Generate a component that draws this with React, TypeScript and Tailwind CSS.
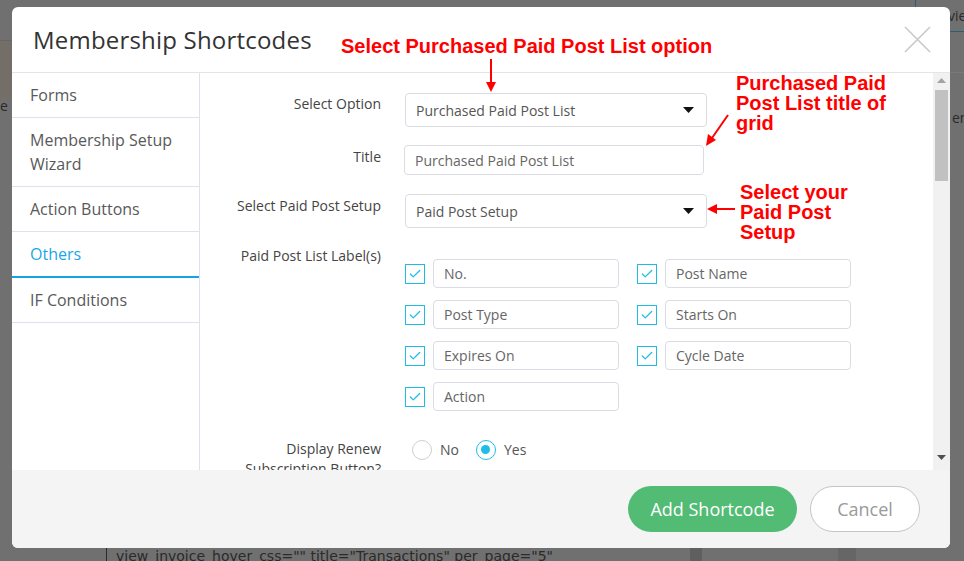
import { Check } from "lucide-react"

const sideItems = [
  { label: "Forms" },
  { label: "Membership Setup Wizard" },
  { label: "Action Buttons" },
  { label: "Others", active: true },
  { label: "IF Conditions" },
]

const labelFields = ["No.", "Post Name", "Post Type", "Starts On", "Expires On", "Cycle Date", "Action"]

function Caret() {
  return (
    <svg width="11" height="6" viewBox="0 0 11 6" className="shrink-0">
      <path d="M0 0h11L5.5 6z" fill="#111" />
    </svg>
  )
}

function SelectBox({ value }: { value: string }) {
  return (
    <div className="flex h-[34px] w-[302px] items-center justify-between rounded-[4px] border border-[#d9dde3] bg-white pl-[10px] pr-[12px] text-[14px] text-[#555]">
      <span>{value}</span>
      <Caret />
    </div>
  )
}

function CheckBox() {
  return (
    <div className="flex h-[20px] w-[20px] shrink-0 items-center justify-center border-[1.5px] border-[#1dbde6] bg-white">
      <Check size={14} strokeWidth={2.2} color="#1dbde6" />
    </div>
  )
}

function Radio({ checked }: { checked?: boolean }) {
  return (
    <div
      className={`flex h-[20px] w-[20px] items-center justify-center rounded-full border bg-white ${
        checked ? "border-[#1dbde6]" : "border-[#cfcfcf]"
      }`}
    >
      {checked && <div className="h-[9px] w-[9px] rounded-full bg-[#1dbde6]" />}
    </div>
  )
}

export default function App() {
  return (
    <div className="relative h-[561px] w-[964px] overflow-hidden bg-[#707070] pl-[12px] pt-[7px] font-['Open_Sans',sans-serif]">
      {/* page behind the overlay */}
      <div className="absolute left-0 top-[40px] h-[58px] w-[12px] border-t border-[#666] bg-[#746e69]" />
      <div className="absolute left-0 top-[95px] text-[14px] text-[#2a2a2a]">e is</div>
      <div className="absolute left-[915px] top-[-4px] h-[36px] w-[70px] rounded-[4px] border border-[#2a5d78] pl-[32px] pt-[8px] text-[14px] text-[#2a2a2a]">
        view
      </div>
      <div className="absolute left-[950px] top-[72px] h-[1px] w-[14px] bg-[#7a7a7a]" />
      <div className="absolute left-[952px] top-[107px] text-[14px] text-[#2a2a2a]">em</div>
      <div className="absolute left-[106px] top-[540px] h-[30px] w-[1px] bg-[#2a2a2a]" />
      <div className="absolute left-[116px] top-[546px] font-['DejaVu_Sans',sans-serif] text-[14px] text-[#2a2a2a]">
        view_invoice_hover_css="" title="Transactions" per_page="5"
      </div>
      <div className="absolute left-[690px] top-[545px] h-[20px] w-[12px] bg-[#5f5f5f]" />
      <div className="absolute left-[838px] top-[545px] h-[20px] w-[18px] bg-[#666]" />

      {/* modal */}
      <div className="relative flex h-[541px] w-[938px] flex-col rounded-[6px] bg-white">
        <div className="flex h-[66px] shrink-0 items-center justify-between border-b border-[#e5e5e5] pl-[21px] pr-[19px]">
          <h2 className="text-[24px] font-normal tracking-[0.2px] text-[#333]">Membership Shortcodes</h2>
          <svg width="27" height="27" viewBox="0 0 27 27">
            <path d="M1 1L26 26M26 1L1 26" stroke="#c9c9c9" strokeWidth="1.6" />
          </svg>
        </div>

        <div className="flex h-[397px] shrink-0">
          <div className="w-[188px] shrink-0 border-r border-[#dfe2ea]">
            {sideItems.map((item) => (
              <div
                key={item.label}
                className={`px-[18px] py-[10px] text-[16px] leading-[24px] ${
                  item.active
                    ? "border-b-2 border-[#12a4e4] text-[#1ba6e5]"
                    : "border-b border-[#dfe2ea] text-[#595959]"
                }`}
              >
                {item.label}
              </div>
            ))}
          </div>

          <div className="relative flex-1 overflow-hidden text-[14px] text-[#444]">
            <div className="flex items-start pt-[20px]">
              <div className="w-[181px] pt-[1px] text-right leading-[20px]">Select Option</div>
              <div className="ml-[24px]">
                <SelectBox value="Purchased Paid Post List" />
              </div>
            </div>

            <div className="mt-[18px] flex items-start">
              <div className="w-[181px] pt-[2px] text-right leading-[20px]">Title</div>
              <div className="ml-[23px] flex h-[30px] w-[300px] items-center rounded-[4px] border border-[#d9dde3] pl-[10px] text-[#666]">
                Purchased Paid Post List
              </div>
            </div>

            <div className="mt-[19px] flex items-start">
              <div className="w-[181px] pt-[2px] text-right leading-[20px]">Select Paid Post Setup</div>
              <div className="ml-[24px]">
                <SelectBox value="Paid Post Setup" />
              </div>
            </div>

            <div className="mt-[18px] flex items-start">
              <div className="w-[181px] text-right leading-[20px]">Paid Post List Label(s)</div>
              <div className="ml-[24px] mt-[13px] grid grid-cols-[214px_214px] gap-x-[18px] gap-y-[12px]">
                {labelFields.map((f) => (
                  <div key={f} className="flex items-center gap-[8px]">
                    <CheckBox />
                    <div className="flex h-[29px] flex-1 items-center rounded-[4px] border border-[#d9dde3] pl-[10px] text-[#666]">
                      {f}
                    </div>
                  </div>
                ))}
              </div>
            </div>

            <div className="mt-[28px] flex items-start">
              <div className="w-[181px] pl-[20px] text-right leading-[20px]">Display Renew Subscription Button?</div>
              <div className="ml-[31px] flex items-center text-[#555]">
                <Radio />
                <span className="ml-[8px]">No</span>
                <div className="ml-[17px]">
                  <Radio checked />
                </div>
                <span className="ml-[8px]">Yes</span>
              </div>
            </div>
          </div>

          {/* scrollbar */}
          <div className="flex w-[17px] shrink-0 flex-col items-center bg-[#f1f1f1]">
            <svg width="9" height="5" viewBox="0 0 9 5" className="mt-[5px]">
              <path d="M0 5h9L4.5 0z" fill="#a3a3a3" />
            </svg>
            <div className="mt-[7px] h-[91px] w-[13px] bg-[#c1c1c1]" />
            <div className="flex-1" />
            <svg width="9" height="5" viewBox="0 0 9 5" className="mb-[10px]">
              <path d="M0 0h9L4.5 5z" fill="#505050" />
            </svg>
          </div>
        </div>

        <div className="flex flex-1 items-center justify-end gap-[13px] rounded-b-[6px] bg-[#f4f4f4] pr-[30px]">
          <button className="h-[46px] w-[169px] rounded-full bg-[#52bb74] text-[18px] text-white">Add Shortcode</button>
          <button className="h-[46px] w-[110px] rounded-full border border-[#c4c4c4] bg-white text-[18px] text-[#9a9a9a]">
            Cancel
          </button>
        </div>

        {/* annotations */}
        <div className="absolute left-[329px] top-[29px] font-['Liberation_Sans',Arial,sans-serif] text-[20px] font-bold leading-[20px] text-[#ff0000]">
          Select Purchased Paid Post List option
        </div>
        <svg className="absolute left-[474px] top-[52px]" width="10" height="34" viewBox="0 0 10 34">
          <path d="M5 0V24" stroke="#ff0000" strokeWidth="2" />
          <path d="M0 23h10L5 33z" fill="#ff0000" />
        </svg>
        <div className="absolute left-[724px] top-[66px] w-[180px] font-['Liberation_Sans',Arial,sans-serif] text-[20px] font-bold leading-[20px] text-[#ff0000]">
          Purchased Paid<br />Post List title of<br />grid
        </div>
        <svg className="absolute left-[692px] top-[107px]" width="26" height="34" viewBox="0 0 26 34">
          <path d="M24 1L8 24" stroke="#ff0000" strokeWidth="2" />
          <path d="M2 32L4 20L12 26z" fill="#ff0000" />
        </svg>
        <div className="absolute left-[728px] top-[175px] w-[150px] font-['Liberation_Sans',Arial,sans-serif] text-[20px] font-bold leading-[20px] text-[#ff0000]">
          Select your<br />Paid Post<br />Setup
        </div>
        <svg className="absolute left-[695px] top-[197px]" width="28" height="10" viewBox="0 0 28 10">
          <path d="M8 5H28" stroke="#ff0000" strokeWidth="2" />
          <path d="M0 5L10 0V10z" fill="#ff0000" />
        </svg>
      </div>
    </div>
  )
}
